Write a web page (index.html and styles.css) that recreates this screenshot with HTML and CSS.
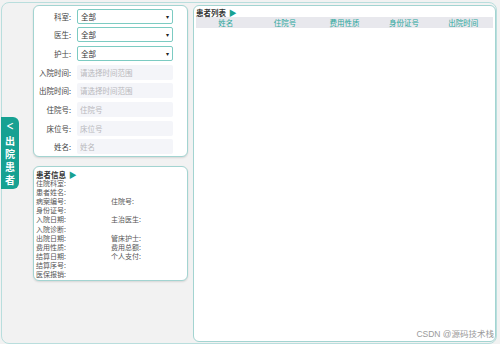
FILE: index.html
```html
<!DOCTYPE html>
<html lang="zh">
<head>
  <meta charset="UTF-8">
  <title>出院患者</title>
  <link rel="stylesheet" href="styles.css">
</head>
<body>
  <div class="app">
    <div class="side-tab">
      <span class="tab-arrow">&lt;</span>
      <span>出</span><span>院</span><span>患</span><span>者</span>
    </div>

    <div class="left-col">
      <form class="card search-card">
        <div class="row"><label>科室:</label><div class="sel">全部<span class="caret">▾</span></div></div>
        <div class="row"><label>医生:</label><div class="sel">全部<span class="caret">▾</span></div></div>
        <div class="row"><label>护士:</label><div class="sel">全部<span class="caret">▾</span></div></div>
        <div class="row"><label>入院时间:</label><input type="text" placeholder="请选择时间范围"></div>
        <div class="row"><label>出院时间:</label><input type="text" placeholder="请选择时间范围"></div>
        <div class="row"><label>住院号:</label><input type="text" placeholder="住院号"></div>
        <div class="row"><label>床位号:</label><input type="text" placeholder="床位号"></div>
        <div class="row"><label>姓名:</label><input type="text" placeholder="姓名"></div>
      </form>

      <div class="card info-card">
        <div class="title">患者信息 <span class="tri">▶</span></div>
        <div class="info-grid">
          <span>住院科室:</span><span></span>
          <span>患者姓名:</span><span></span>
          <span>病案编号:</span><span>住院号:</span>
          <span>身份证号:</span><span></span>
          <span>入院日期:</span><span>主治医生:</span>
          <span>入院诊断:</span><span></span>
          <span>出院日期:</span><span>管床护士:</span>
          <span>费用性质:</span><span>费用总额:</span>
          <span>结算日期:</span><span>个人支付:</span>
          <span>结算序号:</span><span></span>
          <span>医保报销:</span><span></span>
        </div>
      </div>
    </div>

    <div class="list-panel">
      <div class="title">患者列表 <span class="tri">▶</span></div>
      <div class="thead">
        <span>姓名</span>
        <span>住院号</span>
        <span>费用性质</span>
        <span>身份证号</span>
        <span>出院时间</span>
      </div>
    </div>
  </div>

  <div class="watermark">CSDN @源码技术栈</div>
</body>
</html>
```

FILE: styles.css
```css
html, body {
  height: 344px;
  overflow: hidden;
}
body {
  margin: 0;
  background: #f2f2f2;
  font-family: "Noto Sans CJK SC", "Noto Sans", sans-serif;
  color: #333;
}
.app {
  position: relative;
  display: flex;
  gap: 5px;
  margin: 2px 3px 0 1px;
  padding: 2px 0 0 31px;
  height: 342px;
  box-sizing: border-box;
  border: 1px solid #b9dedd;
  border-radius: 8px;
}
.side-tab {
  position: absolute;
  left: -1px;
  top: 114px;
  width: 18px;
  height: 72px;
  background: #17a192;
  border-radius: 0 6px 6px 0;
  color: #fff;
  display: flex;
  flex-direction: column;
  align-items: center;
  padding-top: 3px;
  box-sizing: border-box;
  font-size: 10px;
  font-weight: bold;
  line-height: 13px;
}
.tab-arrow {
  font-size: 9px;
  line-height: 12px;
  font-weight: normal;
  font-family: "DejaVu Sans", sans-serif;
  transform: scaleY(1.4);
  margin-bottom: 2px;
}
.left-col {
  width: 155px;
  display: flex;
  flex-direction: column;
  gap: 9px;
}
.card {
  background: #fff;
  border: 1px solid #a3d4d1;
  border-radius: 6px;
  box-shadow: 0 1px 2px rgba(0, 0, 0, 0.12);
  box-sizing: border-box;
}
.search-card {
  height: 152px;
  margin: 0;
  padding-top: 2px;
}
.row {
  display: flex;
  align-items: center;
  height: 16px;
  margin-bottom: 2.7px;
}
.row label {
  width: 37px;
  text-align: right;
  font-size: 7.5px;
  color: #444;
  margin-right: 6px;
  white-space: nowrap;
}
.sel, .row input {
  width: 96px;
  height: 15px;
  box-sizing: border-box;
  font-size: 7.5px;
  font-family: inherit;
}
.sel {
  position: relative;
  border: 1px solid #7ccbc2;
  border-radius: 2px;
  padding-left: 3px;
  line-height: 13px;
  color: #333;
}
.caret {
  position: absolute;
  right: 3px;
  top: 0;
  font-size: 6px;
  color: #222;
}
.row input {
  border: none;
  background: #f4f5f9;
  border-radius: 2px;
  padding: 0 3px;
  outline: none;
}
.row input::placeholder {
  color: #b8b8bc;
}
.info-card {
  height: 115px;
  padding: 3px 0 0 2px;
  font-size: 7px;
  line-height: 9.1px;
}
.title {
  font-weight: bold;
  font-size: 7.5px;
  line-height: 9.1px;
  color: #333;
}
.tri {
  color: #17a192;
  font-size: 8px;
  margin-left: 1px;
}
.info-grid {
  display: grid;
  grid-template-columns: 75px 1fr;
  grid-auto-rows: 9.1px;
  color: #555;
}
.info-grid span {
  display: block;
  white-space: nowrap;
}
.list-panel {
  width: 303px;
  height: 337px;
  background: #fff;
  border: 1px solid #a3d4d1;
  border-radius: 6px;
  box-sizing: border-box;
  padding: 2px 2px 0 2px;
}
.list-panel .title {
  line-height: 9px;
}
.thead {
  display: grid;
  grid-template-columns: repeat(5, 1fr);
  height: 11px;
  background: #e8e8ed;
  color: #2aa79c;
  font-size: 7.5px;
  line-height: 11px;
  text-align: center;
}
.watermark {
  position: absolute;
  right: 6px;
  bottom: 5px;
  font-family: "Liberation Sans", "Noto Sans CJK SC", sans-serif;
  font-size: 8.5px;
  color: #9a9a9a;
}
```
